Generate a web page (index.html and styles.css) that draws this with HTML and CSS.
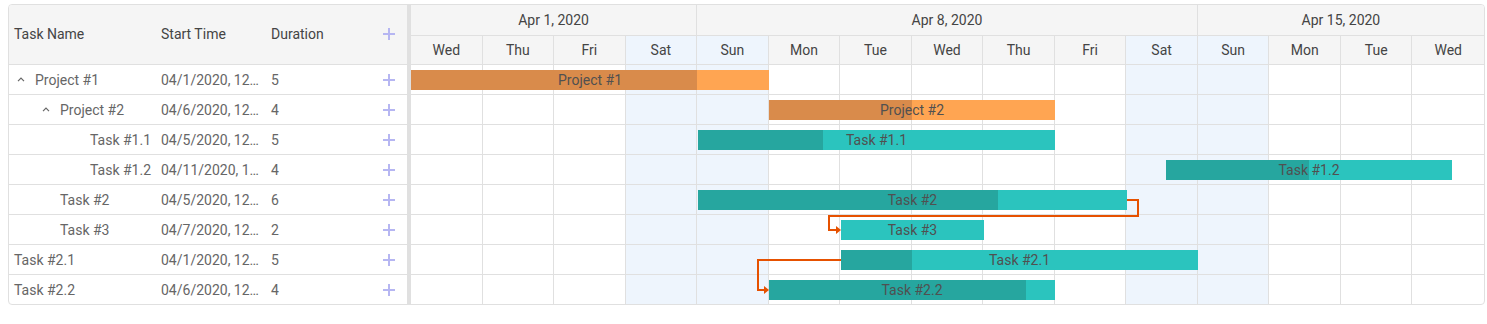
FILE: index.html
```html
<!DOCTYPE html>
<html lang="en">
<head>
<meta charset="utf-8">
<title>Gantt</title>
<link rel="stylesheet" href="styles.css">
</head>
<body>
<div class="gantt">
  <div class="grid">
    <div class="grid-head">
      <div class="cell">Task Name</div>
      <div class="cell">Start Time</div>
      <div class="cell">Duration</div>
      <div class="cell add"><svg class="plus" width="12" height="12" viewBox="0 0 12 12"><rect x="5" y="0" width="2" height="12"/><rect x="0" y="5" width="12" height="2"/></svg></div>
    </div>
    <div class="grid-row">
      <div class="cell name lvl0p"><span class="exp"><svg width="8" height="5" viewBox="0 0 8 5"><polyline points="1,4.2 4,1.2 7,4.2"/></svg></span>Project #1</div>
      <div class="cell">04/1/2020, 12…</div>
      <div class="cell">5</div>
      <div class="cell add"><svg class="plus" width="12" height="12" viewBox="0 0 12 12"><rect x="5" y="0" width="2" height="12"/><rect x="0" y="5" width="12" height="2"/></svg></div>
    </div>
    <div class="grid-row">
      <div class="cell name lvl1p"><span class="exp"><svg width="8" height="5" viewBox="0 0 8 5"><polyline points="1,4.2 4,1.2 7,4.2"/></svg></span>Project #2</div>
      <div class="cell">04/6/2020, 12…</div>
      <div class="cell">4</div>
      <div class="cell add"><svg class="plus" width="12" height="12" viewBox="0 0 12 12"><rect x="5" y="0" width="2" height="12"/><rect x="0" y="5" width="12" height="2"/></svg></div>
    </div>
    <div class="grid-row">
      <div class="cell name lvl2">Task #1.1</div>
      <div class="cell">04/5/2020, 12…</div>
      <div class="cell">5</div>
      <div class="cell add"><svg class="plus" width="12" height="12" viewBox="0 0 12 12"><rect x="5" y="0" width="2" height="12"/><rect x="0" y="5" width="12" height="2"/></svg></div>
    </div>
    <div class="grid-row">
      <div class="cell name lvl2">Task #1.2</div>
      <div class="cell">04/11/2020, 1…</div>
      <div class="cell">4</div>
      <div class="cell add"><svg class="plus" width="12" height="12" viewBox="0 0 12 12"><rect x="5" y="0" width="2" height="12"/><rect x="0" y="5" width="12" height="2"/></svg></div>
    </div>
    <div class="grid-row">
      <div class="cell name lvl1">Task #2</div>
      <div class="cell">04/5/2020, 12…</div>
      <div class="cell">6</div>
      <div class="cell add"><svg class="plus" width="12" height="12" viewBox="0 0 12 12"><rect x="5" y="0" width="2" height="12"/><rect x="0" y="5" width="12" height="2"/></svg></div>
    </div>
    <div class="grid-row">
      <div class="cell name lvl1">Task #3</div>
      <div class="cell">04/7/2020, 12…</div>
      <div class="cell">2</div>
      <div class="cell add"><svg class="plus" width="12" height="12" viewBox="0 0 12 12"><rect x="5" y="0" width="2" height="12"/><rect x="0" y="5" width="12" height="2"/></svg></div>
    </div>
    <div class="grid-row">
      <div class="cell name">Task #2.1</div>
      <div class="cell">04/1/2020, 12…</div>
      <div class="cell">5</div>
      <div class="cell add"><svg class="plus" width="12" height="12" viewBox="0 0 12 12"><rect x="5" y="0" width="2" height="12"/><rect x="0" y="5" width="12" height="2"/></svg></div>
    </div>
    <div class="grid-row">
      <div class="cell name">Task #2.2</div>
      <div class="cell">04/6/2020, 12…</div>
      <div class="cell">4</div>
      <div class="cell add"><svg class="plus" width="12" height="12" viewBox="0 0 12 12"><rect x="5" y="0" width="2" height="12"/><rect x="0" y="5" width="12" height="2"/></svg></div>
    </div>
  </div>
  <div class="splitter"></div>
  <div class="timeline">
    <div class="tl-head">
      <div class="months">
        <div class="m m4">Apr 1, 2020</div>
        <div class="m m7">Apr 8, 2020</div>
        <div class="m m4">Apr 15, 2020</div>
      </div>
      <div class="days">
        <div class="d">Wed</div><div class="d">Thu</div><div class="d">Fri</div><div class="d we">Sat</div><div class="d we">Sun</div>
        <div class="d">Mon</div><div class="d">Tue</div><div class="d">Wed</div><div class="d">Thu</div><div class="d">Fri</div>
        <div class="d we">Sat</div><div class="d we">Sun</div><div class="d">Mon</div><div class="d">Tue</div><div class="d">Wed</div>
      </div>
    </div>
    <div class="tl-body">
      <div class="cols">
        <div class="col"></div><div class="col"></div><div class="col"></div><div class="col we"></div><div class="col we"></div>
        <div class="col"></div><div class="col"></div><div class="col"></div><div class="col"></div><div class="col"></div>
        <div class="col we"></div><div class="col we"></div><div class="col"></div><div class="col"></div><div class="col"></div>
      </div>
      <div class="rows">
        <div class="row"><div class="bar project" style="left:0px;width:358px"><div class="prog" style="width:80%"></div><span class="lbl">Project #1</span></div></div>
        <div class="row"><div class="bar project" style="left:358px;width:286px"><div class="prog" style="width:50%"></div><span class="lbl">Project #2</span></div></div>
        <div class="row"><div class="bar task" style="left:287px;width:357px"><div class="prog" style="width:35%"></div><span class="lbl">Task #1.1</span></div></div>
        <div class="row"><div class="bar task" style="left:755px;width:286px"><div class="prog" style="width:50%"></div><span class="lbl">Task #1.2</span></div></div>
        <div class="row"><div class="bar task" style="left:287px;width:429px"><div class="prog" style="width:70%"></div><span class="lbl">Task #2</span></div></div>
        <div class="row"><div class="bar task" style="left:430px;width:143px"><div class="prog" style="width:0%"></div><span class="lbl">Task #3</span></div></div>
        <div class="row"><div class="bar task" style="left:430px;width:357px"><div class="prog" style="width:20%"></div><span class="lbl">Task #2.1</span></div></div>
        <div class="row"><div class="bar task" style="left:358px;width:286px"><div class="prog" style="width:90%"></div><span class="lbl">Task #2.2</span></div></div>
      </div>
      <svg class="links" width="1073" height="239" viewBox="0 0 1073 239">
        <polyline points="716,135 727,135 727,151 418,151 418,165 425,165"/>
        <polygon points="425,161 430,165 425,169"/>
        <polyline points="430,195 347,195 347,225 353,225"/>
        <polygon points="353,221 358,225 353,229"/>
      </svg>
    </div>
  </div>
</div>
</body>
</html>
```

FILE: styles.css
```css
* { box-sizing: border-box; }
html, body { margin: 0; background: #fff; }
body {
  padding: 4px 2px 0 8px;
  font-family: Roboto, "Liberation Sans", sans-serif;
  font-size: 14px;
  color: #666;
}
.gantt {
  display: flex;
  height: 301px;
  border: 1px solid #e0e0e0;
  border-radius: 4px;
  overflow: hidden;
}
.grid { width: 398px; flex: none; display: flex; flex-direction: column; }
.grid-head, .grid-row {
  display: grid;
  grid-template-columns: 147px 110px 104px 37px;
  align-items: center;
  border-bottom: 1px solid #e0e0e0;
}
.grid-head { height: 60px; background: #f5f5f5; color: #444; padding-bottom: 2px; }
.grid-head .add { padding-top: 3px; }
.grid-row { height: 30px; }
.grid-row:last-child { border-bottom: none; height: 29px; }
.cell {
  padding: 0 5px;
  white-space: nowrap;
  overflow: hidden;
}
.cell.add { display: flex; justify-content: center; padding: 0; }
.plus { display: block; fill: #b6b6f2; }
.name { display: flex; align-items: center; }
.exp { width: 14px; flex: none; margin-right: 7px; display: flex; justify-content: center; }
.exp svg { display: block; }
.exp polyline { fill: none; stroke: #666; stroke-width: 1.2; }
.lvl0p { padding-left: 5px; }
.lvl1p { padding-left: 30px; }
.lvl1 { padding-left: 51px; }
.lvl2 { padding-left: 81px; }
.splitter { width: 4px; flex: none; background: #e0e0e0; }
.timeline { width: 1073px; flex: none; display: flex; flex-direction: column; }
.tl-head { background: #f5f5f5; color: #444; }
.months { display: grid; grid-template-columns: repeat(15, 1fr); height: 31px; border-bottom: 1px solid #e0e0e0; }
.m { display: flex; align-items: center; justify-content: center; border-right: 1px solid #e0e0e0; }
.m:last-child { border-right: none; }
.m4 { grid-column: span 4; }
.m7 { grid-column: span 7; }
.days { display: grid; grid-template-columns: repeat(15, 1fr); height: 29px; border-bottom: 1px solid #e0e0e0; }
.d { display: flex; align-items: center; justify-content: center; border-right: 1px solid #e0e0e0; }
.d:last-child { border-right: none; }
.we { background: #eef5fd; }
.tl-body { position: relative; flex: 1; }
.cols { position: absolute; inset: 0; display: grid; grid-template-columns: repeat(15, 1fr); }
.col { border-right: 1px solid #e0e0e0; }
.col:last-child { border-right: none; }
.rows { position: relative; display: flex; flex-direction: column; }
.row { position: relative; height: 30px; border-bottom: 1px solid #e0e0e0; }
.row:last-child { border-bottom: none; height: 29px; }
.bar { position: absolute; top: 5px; height: 20px; overflow: hidden; }
.prog { position: absolute; left: 0; top: 0; bottom: 0; }
.lbl { position: relative; display: block; text-align: center; line-height: 20px; color: #505050; white-space: nowrap; }
.project { background: #ffa552; }
.project .prog { background: #d98b4b; }
.task { background: #2bc4be; }
.task .prog { background: #26a69f; }
.links { position: absolute; left: 0; top: 0; overflow: visible; }
.links polyline { fill: none; stroke: #e65100; stroke-width: 2; }
.links polygon { fill: #e65100; }
```
